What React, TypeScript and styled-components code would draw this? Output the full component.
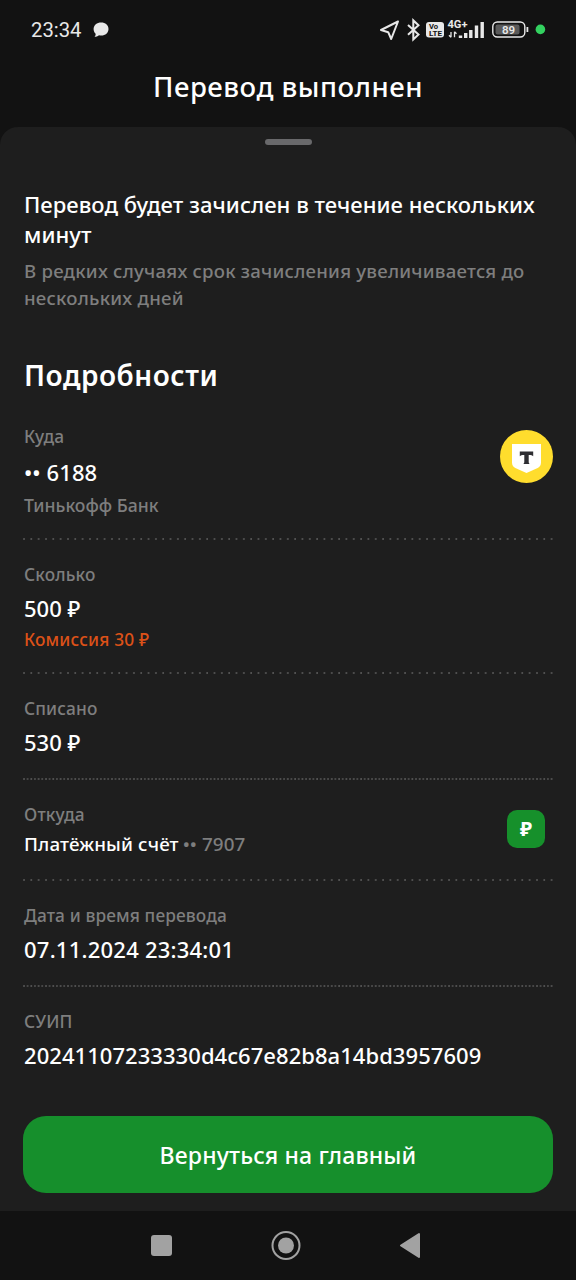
import React from "react";
import styled, { createGlobalStyle } from "styled-components";

const GlobalStyle = createGlobalStyle`
  * { box-sizing: border-box; }
  body { margin: 0; background: #121212; }
`;

const Screen = styled.main`
  display: flex;
  flex-direction: column;
  width: 576px;
  height: 1280px;
  overflow: hidden;
  background: #121212;
  color: #fff;
  font-family: "Noto Sans", "Open Sans", sans-serif;
`;

const StatusBar = styled.header`
  display: flex;
  align-items: center;
  justify-content: space-between;
  height: 60px;
  padding: 0 30px 0 31px;
  color: #e8e8e8;
`;

const Clock = styled.div`
  display: flex;
  align-items: center;
  gap: 11px;
  font: 400 20.3px/24px Roboto, sans-serif;
`;

const TitleBar = styled.div`
  height: 67px;
  display: flex;
  justify-content: center;
  padding-top: 8px;
`;

const Sheet = styled.section`
  display: flex;
  flex-direction: column;
  height: 1084px;
  padding: 12px 23px 0 24px;
  border-radius: 18px 18px 0 0;
  background: #1e1e1e;
`;

const Handle = styled.div`
  align-self: center;
  flex: none;
  width: 47px;
  height: 6px;
  border-radius: 3px;
  background: #69696b;
`;

const Text = styled.div<{ $size: number; $line: number; $track?: number; $color?: string; $weight?: number; $top?: number }>`
  font-size: ${(p) => p.$size}px;
  line-height: ${(p) => p.$line}px;
  letter-spacing: ${(p) => p.$track ?? 0}px;
  color: ${(p) => p.$color ?? "#fff"};
  font-weight: ${(p) => p.$weight ?? 500};
  margin-top: ${(p) => p.$top ?? 0}px;
  white-space: nowrap;
`;

const Row = styled.div<{ $height: number; $top?: number }>`
  display: flex;
  justify-content: space-between;
  flex: none;
  height: ${(p) => p.$height}px;
  padding-top: ${(p) => p.$top ?? 23}px;
`;

const Account = styled.div`
  display: flex;
  gap: 4px;
`;

const Divider = styled.div<{ $dense?: boolean }>`
  flex: none;
  height: 2px;
  margin-left: -1px;
  background-image: radial-gradient(circle at 1px 1px, #666 0.4px, transparent 1.2px)
    ${(p) => (p.$dense ? ", radial-gradient(circle at 4.6px 1px, #5c5c5c 0.4px, transparent 1.2px)" : "")};
  background-size: 7.34px 2px;
`;

const BankLogo = styled.svg`
  margin-top: 5px;
`;

const RubleBadge = styled.div`
  display: grid;
  place-items: center;
  width: 38px;
  height: 38px;
  margin: 7px 8px 0 0;
  border-radius: 10px;
  background: #16902b;
`;

const MainButton = styled.button`
  flex: none;
  height: 77px;
  margin: 0 0 0 -1px;
  padding: 0;
  border: 0;
  border-radius: 23px;
  background: #168f2c;
  font-family: inherit;
`;

const NavBar = styled.nav`
  display: flex;
  align-items: center;
  height: 69px;
`;

const GREY = "#7e7e7e";

function StatusIcons() {
  return (
    <svg width="168" height="28" viewBox="378 16 168 28" fill="none">
      <path d="M398 21.5 381 30l7.2 2.2 3 6.8Z" stroke="#e8e8e8" strokeWidth="2" strokeLinejoin="round" />
      <path d="m408 25 10.5 9.6-5.2 4.8V20.4l5.2 4.8L408 34.8" stroke="#e8e8e8" strokeWidth="2" />
      <rect x="426" y="22" width="18" height="15.6" rx="3" fill="#e8e8e8" />
      <g fontFamily="Roboto, sans-serif" fontWeight="700">
        <text x="429" y="29.4" fontSize="7.6" fill="#121212">Vo</text>
        <text x="429" y="36.2" fontSize="7.2" fill="#121212" textLength="13" lengthAdjust="spacingAndGlyphs">LTE</text>
        <text x="447.5" y="28.4" fontSize="10" fill="#e8e8e8" textLength="20" lengthAdjust="spacingAndGlyphs">4G+</text>
      </g>
      <path d="M451 32v5.2m-2-2 2 2.2m3.5-5.6v5.4m0-5.4 2 2" stroke="#e8e8e8" strokeWidth="1.3" />
      <path d="M460.5 38v-2.5M465.7 38v-5M470.8 38v-8M476.5 38V25.5M482.2 38V22" stroke="#e8e8e8" strokeWidth="3.4" />
      <rect x="492.8" y="22" width="32" height="15" rx="4.5" stroke="#e8e8e8" strokeWidth="1.4" />
      <rect x="495.5" y="24.5" width="24" height="10" rx="2" fill="#5a5a5a" />
      <path d="M527.4 27v5" stroke="#e8e8e8" strokeWidth="1.8" />
      <text x="508.5" y="33.6" fontSize="11.5" fontWeight="600" textAnchor="middle" fill="#e8e8e8" fontFamily="Roboto, sans-serif">89</text>
      <circle cx="540.4" cy="29.4" r="4.8" fill="#33d160" />
    </svg>
  );
}

function Field({ label, track, children }: { label: string; track?: number; children: React.ReactNode }) {
  return (
    <div>
      <Text $size={17.3} $line={24} $track={track ?? 0.15} $color={GREY}>{label}</Text>
      {children}
    </div>
  );
}

export default function App() {
  return (
    <Screen>
      <GlobalStyle />
      <StatusBar>
        <Clock>
          23:34
          <svg width="16" height="16" viewBox="0 0 16 16" fill="#e8e8e8">
            <path d="M8.2.6C12.3.6 15.5 3.3 15.5 7s-3 6.6-7.3 6.600c-.8 0-1.5-.1-2.2-.3-1.4 1.2-2.9 1.5-4.6 1.5 1-.8 1.3-1.9 1.2-3.100C1.200 10.500.6 8.900.6 7.100.6 3.300 3.900.6 8.200.6Z" />
          </svg>
        </Clock>
        <StatusIcons />
      </StatusBar>
      <TitleBar>
        <Text $size={27.5} $line={38} $track={0.52}>Перевод выполнен</Text>
      </TitleBar>
      <Sheet>
        <Handle />
        <Text $size={22} $line={29.5} $track={0.04} $top={45}>
          Перевод будет зачислен в течение нескольких<br />минут
        </Text>
        <Text $size={18.6} $line={26.5} $track={0.23} $top={9} $color={GREY}>
          В редких случаях срок зачисления увеличивается до<br />нескольких дней
        </Text>
        <Text $size={28} $line={38} $track={0.52} $top={45} $weight={600}>Подробности</Text>

        <Row $height={144} $top={31}>
          <Field label="Куда">
            <Text $size={22} $line={30} $track={0.1} $top={8}>•• 6188</Text>
            <Text $size={17.6} $line={24} $top={6} $color={GREY}>Тинькофф Банк</Text>
          </Field>
          <BankLogo width="53" height="53" viewBox="0 0 53 53">
            <circle cx="26.5" cy="26.5" r="26.5" fill="#ffdd2d" />
            <path d="M12 14h29v18.5c0 2.800-1.100 4.200-3.300 5.500L26.500 43l-11.200-5C13.100 36.700 12 35.300 12 32.500Z" fill="#fff" />
            <path d="M19.800 21.500h13.400v4.800c-.8-1-2-1.300-4.500-1.300v6.500c0 1.400.3 2 1.200 2.600h-6.800c.9-.6 1.200-1.200 1.200-2.600V25c-2.500 0-3.700.3-4.500 1.300Z" fill="#2e2e32" />
          </BankLogo>
        </Row>
        <Divider />
        <Row $height={132}>
          <Field label="Сколько">
            <Text $size={22} $line={30} $top={6}>500 ₽</Text>
            <Text $size={17.3} $line={24} $track={0.17} $top={5} $color="#dc5118">Комиссия 30 ₽</Text>
          </Field>
        </Row>
        <Divider />
        <Row $height={104}>
          <Field label="Списано">
            <Text $size={22} $line={30} $top={6}>530 ₽</Text>
          </Field>
        </Row>
        <Divider $dense />
        <Row $height={99}>
          <Field label="Откуда">
            <Account>
              <Text $size={18.8} $line={28} $track={0.13} $top={3}>Платёжный счёт</Text>
              <Text $size={18.8} $line={28} $track={0.1} $top={3} $color={GREY}>•• 7907</Text>
            </Account>
          </Field>
          <RubleBadge>
            <Text $size={20} $line={26} $weight={700}>₽</Text>
          </RubleBadge>
        </Row>
        <Divider />
        <Row $height={104}>
          <Field label="Дата и время перевода" track={0.12}>
            <Text $size={22} $line={30} $track={0.23} $top={6}>07.11.2024 23:34:01</Text>
          </Field>
        </Row>
        <Divider $dense />
        <Row $height={129}>
          <Field label="СУИП">
            <Text $size={22} $line={30} $track={0.05} $top={6}>20241107233330d4c67e82b8a14bd3957609</Text>
          </Field>
        </Row>
        <MainButton>
          <Text $size={23} $line={30} $track={0.17}>Вернуться на главный</Text>
        </MainButton>
      </Sheet>
      <NavBar>
        <svg width="576" height="69" viewBox="0 1211 576 69" fill="#a2a2a2">
          <rect x="151" y="1235" width="21" height="21" rx="3" />
          <circle cx="286" cy="1245.5" r="13.5" fill="none" stroke="#a2a2a2" strokeWidth="2" />
          <circle cx="286" cy="1245.5" r="8" />
          <path d="M401 1245.500 419 1234v23Z" stroke="#a2a2a2" strokeWidth="2" strokeLinejoin="round" />
        </svg>
      </NavBar>
    </Screen>
  );
}
